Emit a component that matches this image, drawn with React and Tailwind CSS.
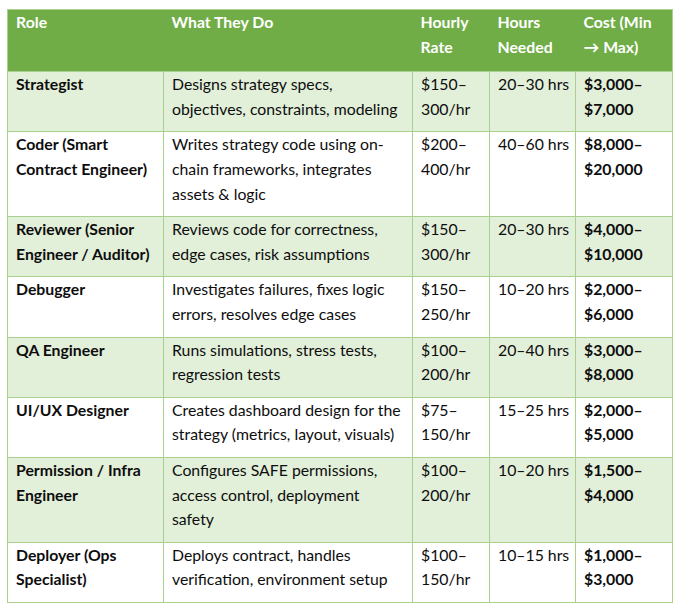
import React from 'react';

const rows = [
  {
    role: ['Strategist'],
    what: ['Designs strategy specs,', 'objectives, constraints, modeling'],
    rate: ['$150–', '300/hr'],
    hours: '20–30 hrs',
    cost: ['$3,000–', '$7,000'],
  },
  {
    role: ['Coder (Smart', 'Contract Engineer)'],
    what: ['Writes strategy code using on-', 'chain frameworks, integrates', 'assets & logic'],
    rate: ['$200–', '400/hr'],
    hours: '40–60 hrs',
    cost: ['$8,000–', '$20,000'],
  },
  {
    role: ['Reviewer (Senior', 'Engineer / Auditor)'],
    what: ['Reviews code for correctness,', 'edge cases, risk assumptions'],
    rate: ['$150–', '300/hr'],
    hours: '20–30 hrs',
    cost: ['$4,000–', '$10,000'],
  },
  {
    role: ['Debugger'],
    what: ['Investigates failures, fixes logic', 'errors, resolves edge cases'],
    rate: ['$150–', '250/hr'],
    hours: '10–20 hrs',
    cost: ['$2,000–', '$6,000'],
  },
  {
    role: ['QA Engineer'],
    what: ['Runs simulations, stress tests,', 'regression tests'],
    rate: ['$100–', '200/hr'],
    hours: '20–40 hrs',
    cost: ['$3,000–', '$8,000'],
  },
  {
    role: ['UI/UX Designer'],
    what: ['Creates dashboard design for the', 'strategy (metrics, layout, visuals)'],
    rate: ['$75–', '150/hr'],
    hours: '15–25 hrs',
    cost: ['$2,000–', '$5,000'],
  },
  {
    role: ['Permission / Infra', 'Engineer'],
    what: ['Configures SAFE permissions,', 'access control, deployment', 'safety'],
    rate: ['$100–', '200/hr'],
    hours: '10–20 hrs',
    cost: ['$1,500–', '$4,000'],
  },
  {
    role: ['Deployer (Ops', 'Specialist)'],
    what: ['Deploys contract, handles', 'verification, environment setup'],
    rate: ['$100–', '150/hr'],
    hours: '10–15 hrs',
    cost: ['$1,000–', '$3,000'],
  },
];

const Lines = ({ lines }) =>
  lines.map((l, i) => (
    <div key={i} className="whitespace-nowrap">
      {l}
    </div>
  ));

const cell = 'align-top pl-[8px] pr-[2px] pt-0 pb-[10px] border border-[#a9d08e]';
const head = 'align-top pl-[8px] pb-[12px] font-bold';

export default function App() {
  return (
    <div
      className="min-h-screen bg-white pl-[7px] pt-[9px] text-[15.8px] leading-[24.6px] text-[#0d0d0d]"
      style={{ fontFamily: 'Lato, "Open Sans", sans-serif' }}
    >
      <table className="table-fixed border-collapse border border-[#a9d08e] w-[665px]">
        <colgroup>
          <col className="w-[156px]" />
          <col className="w-[249px]" />
          <col className="w-[77px]" />
          <col className="w-[86px]" />
          <col className="w-[97px]" />
        </colgroup>
        <thead>
          <tr className="bg-[#70ad47] text-white text-left">
            <th className={head}>Role</th>
            <th className={head}>What They Do</th>
            <th className={head}>
              <Lines lines={['Hourly', 'Rate']} />
            </th>
            <th className={head}>
              <Lines lines={['Hours', 'Needed']} />
            </th>
            <th className={head}>
              <Lines lines={['Cost (Min', '→ Max)']} />
            </th>
          </tr>
        </thead>
        <tbody>
          {rows.map((r, i) => (
            <tr key={i} className={i % 2 === 0 ? 'bg-[#e2efd9]' : 'bg-white'}>
              <td className={`${cell} font-bold`}>
                <Lines lines={r.role} />
              </td>
              <td className={cell}>
                <Lines lines={r.what} />
              </td>
              <td className={cell}>
                <Lines lines={r.rate} />
              </td>
              <td className={`${cell} whitespace-nowrap`}>{r.hours}</td>
              <td className={`${cell} font-bold`}>
                <Lines lines={r.cost} />
              </td>
            </tr>
          ))}
        </tbody>
      </table>
    </div>
  );
}
